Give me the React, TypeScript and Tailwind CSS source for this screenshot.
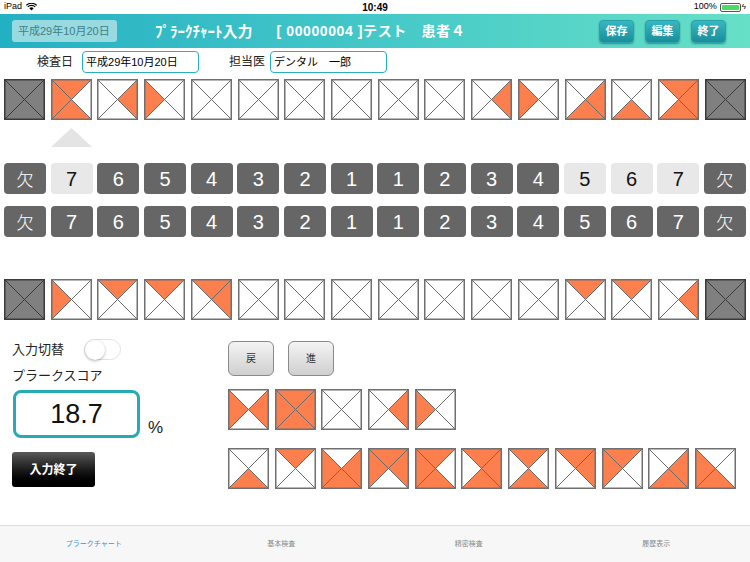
import React from 'react';

const ORANGE = '#fe7f4e';
const JP = { fontFamily: '"Liberation Sans", "Noto Sans CJK JP", sans-serif' };

// t r b l = orange triangles, 'x' = missing tooth
const TOP_ROW = ['x', 'tlb', 'r', 'l', '', '', '', '', '', '', 'r', 'l', 'rb', 'b', 'trb', 'x'];
const BOTTOM_ROW = ['x', 'l', 't', 't', 'tr', '', '', '', '', '', '', '', 't', 't', 'r', 'x'];
const SMALL_ROW_1 = ['lr', 'trbl', '', 'r', 'l'];
const SMALL_ROW_2 = ['b', 't', 'lrb', 'tlr', 'tlb', 'trb', 'tb', 'tr', 'tl', 'rb', 'lb'];

const ROW1 = ['欠', '7', '6', '5', '4', '3', '2', '1', '1', '2', '3', '4', '5', '6', '7', '欠'];
const ROW1_LIGHT = [1, 12, 13, 14];

function Tooth({ f }: { f: string }) {
  const s = 41;
  const c = s / 2;
  const missing = f === 'x';
  const tri = {
    t: `0,0 ${s},0 ${c},${c}`,
    r: `${s},0 ${s},${s} ${c},${c}`,
    b: `${s},${s} 0,${s} ${c},${c}`,
    l: `0,${s} 0,0 ${c},${c}`,
  };
  return (
    <svg width={s} height={s} viewBox={`0 0 ${s} ${s}`} className="shrink-0 block">
      <rect x="0" y="0" width={s} height={s} fill={missing ? '#808080' : '#fff'} />
      {!missing &&
        (['t', 'r', 'b', 'l'] as const).map((k) =>
          f.includes(k) ? <polygon key={k} points={tri[k]} fill={ORANGE} /> : null
        )}
      <line x1="0" y1="0" x2={s} y2={s} stroke={missing ? '#3a3a3a' : '#6a6a6a'} strokeWidth="1" />
      <line x1={s} y1="0" x2="0" y2={s} stroke={missing ? '#3a3a3a' : '#6a6a6a'} strokeWidth="1" />
      <rect x="0.75" y="0.75" width={s - 1.5} height={s - 1.5} fill="none" stroke={missing ? '#3a3a3a' : '#707070'} strokeWidth="1.5" />
    </svg>
  );
}

function NumRow({ light }: { light: number[] }) {
  return (
    <div className="flex justify-between px-[4px]">
      {ROW1.map((n, i) => {
        const isLight = light.includes(i);
        const kan = n === '欠';
        return (
          <div
            key={i}
            className={`w-[42px] h-[31px] rounded-[4px] flex items-center justify-center ${
              isLight ? 'bg-[#e8e8e8] text-[#111]' : 'bg-[#666666] text-white'
            } ${kan ? 'text-[#b0b0b0] text-[17px]' : 'text-[20px]'}`}
            style={{ fontFamily: kan ? '"Noto Sans CJK JP", sans-serif' : '"Liberation Sans", sans-serif', fontWeight: 300 }}
          >
            {n}
          </div>
        );
      })}
    </div>
  );
}

function HeaderBtn({ label }: { label: string }) {
  return (
    <div className="w-[35px] h-[23px] rounded-[4px] bg-gradient-to-b from-[#35b8c2] to-[#1a8e9a] border border-[#2aa0aa] shadow-[0_1px_2px_rgba(0,0,0,0.35)] flex items-center justify-center text-white text-[11px] font-bold">
      {label}
    </div>
  );
}

function GrayBtn({ label }: { label: string }) {
  return (
    <div className="w-[46px] h-[35px] rounded-[6px] border border-[#8a8a8a] bg-gradient-to-b from-[#f4f4f4] to-[#cfcfcf] flex items-center justify-center text-[10px] text-[#333]">
      {label}
    </div>
  );
}

export default function App() {
  return (
    <div className="w-[750px] h-[562px] bg-white flex flex-col overflow-hidden text-[#222]" style={JP}>
      {/* status bar */}
      <div className="h-[14px] relative flex items-center px-[4px] text-[9px] text-black">
        <span>iPad</span>
        <svg width="11" height="8" viewBox="0 0 12 9" className="ml-[4px]">
          <path d="M6 8.5 L3.6 6 A3.4 3.4 0 0 1 8.4 6 Z" fill="#000" />
          <path d="M1.8 4.3 A6 6 0 0 1 10.2 4.3" stroke="#000" strokeWidth="1.3" fill="none" />
          <path d="M0.2 2.6 A8.4 8.4 0 0 1 11.8 2.6" stroke="#000" strokeWidth="1.3" fill="none" />
        </svg>
        <span className="absolute left-1/2 -translate-x-1/2 font-bold text-[10px]">10:49</span>
        <div className="ml-auto flex items-center gap-[3px]">
          <span>100%</span>
          <div className="w-[21px] h-[9px] border border-[#555] rounded-[2px] p-[1px]">
            <div className="w-full h-full bg-[#4cd964] rounded-[1px]" />
          </div>
          <span className="text-[8px] -ml-[2px]">ϟ</span>
        </div>
      </div>

      {/* header */}
      <div className="h-[34px] bg-gradient-to-r from-[#22b0c3] via-[#44c8c8] to-[#66e0c6] flex items-center px-[12px]">
        <div className="w-[105px] h-[22px] rounded-[3px] bg-[#98dadf] text-[#3f7f88] text-[11px] flex items-center pl-[6px]">
          平成29年10月20日
        </div>
        <div className="ml-[38px] text-white font-bold text-[15px]" style={{ fontFamily: '"Noto Sans CJK JP", sans-serif' }}>
          ﾌﾟﾗｰｸﾁｬｰﾄ入力
        </div>
        <div className="ml-[24px] text-white font-bold text-[14px] tracking-[0.6px] whitespace-pre">
          [ 00000004 ]テスト　患者４
        </div>
        <div className="ml-auto mr-[12px] flex gap-[11px]">
          <HeaderBtn label="保存" />
          <HeaderBtn label="編集" />
          <HeaderBtn label="終了" />
        </div>
      </div>

      {/* date / doctor */}
      <div className="mt-[3px] h-[22px] flex items-center text-[12px]">
        <span className="ml-[37px]">検査日</span>
        <div className="ml-[9px] w-[117px] h-[22px] border-[1.5px] border-[#2ab0bd] rounded-[4px] flex items-center px-[3px] text-[11px] text-black">
          平成29年10月20日
        </div>
        <span className="ml-[30px]">担当医</span>
        <div className="ml-[5px] w-[117px] h-[22px] border-[1.5px] border-[#2ab0bd] rounded-[4px] flex items-center px-[3px] text-[11px] text-black">
          デンタル　一郎
        </div>
      </div>

      {/* upper teeth */}
      <div className="mt-[6px] flex justify-between px-[4px]">
        {TOP_ROW.map((f, i) => (
          <Tooth key={i} f={f} />
        ))}
      </div>

      {/* selection marker */}
      <div className="mt-[8px] h-[19px] pl-[51px]">
        <svg width="41" height="19" viewBox="0 0 41 19">
          <polygon points="20.5,0 41,19 0,19" fill="#e4e4e4" />
        </svg>
      </div>

      <div className="mt-[16px]">
        <NumRow light={ROW1_LIGHT} />
      </div>
      <div className="mt-[12px]">
        <NumRow light={[]} />
      </div>

      {/* lower teeth */}
      <div className="mt-[42px] flex justify-between px-[4px]">
        {BOTTOM_ROW.map((f, i) => (
          <Tooth key={i} f={f} />
        ))}
      </div>

      {/* bottom section */}
      <div className="mt-[19px] flex">
        <div className="w-[228px] shrink-0 pl-[12px]">
          <div className="h-[21px] flex items-center text-[13px]">
            <span>入力切替</span>
            <div className="ml-[20px] w-[37px] h-[21px] rounded-full border border-[#e2e2e2] bg-white relative">
              <div className="absolute left-0 top-0 w-[20px] h-[20px] -mt-[0.5px] rounded-full bg-white shadow-[0_1px_3px_rgba(0,0,0,0.3)]" />
            </div>
          </div>
          <div className="mt-[8px] text-[13px] leading-[16px]">プラークスコア</div>
          <div className="mt-[6px] flex items-end">
            <div className="ml-[1px] w-[127px] h-[48px] border-[3px] border-[#27aab6] rounded-[8px] flex items-center justify-center text-[27px] text-[#111]" style={{ fontFamily: '"Liberation Sans", sans-serif' }}>
              18.7
            </div>
            <span className="ml-[8px] mb-[-2px] text-[17px]" style={{ fontFamily: '"Liberation Sans", sans-serif' }}>%</span>
          </div>
          <div className="mt-[14px] w-[83px] h-[35px] rounded-[3px] bg-gradient-to-b from-[#5a5a5a] via-[#1c1c1c] to-[#000] flex items-center justify-center text-white text-[12px] font-bold">
            入力終了
          </div>
        </div>

        <div className="pt-[2px]">
          <div className="flex gap-[14px]">
            <GrayBtn label="戻" />
            <GrayBtn label="進" />
          </div>
          <div className="mt-[13px] flex gap-[5.7px]">
            {SMALL_ROW_1.map((f, i) => (
              <Tooth key={i} f={f} />
            ))}
          </div>
          <div className="mt-[18px] flex gap-[5.7px]">
            {SMALL_ROW_2.map((f, i) => (
              <Tooth key={i} f={f} />
            ))}
          </div>
        </div>
      </div>

      {/* tab bar */}
      <div className="mt-auto h-[37px] bg-[#f7f7f7] border-t border-[#dedede] grid grid-cols-4 items-center text-[7px]">
        <span className="text-center text-[#3d8fe0]">プラークチャート</span>
        <span className="text-center text-[#8a8a8a]">基本検査</span>
        <span className="text-center text-[#8a8a8a]">精密検査</span>
        <span className="text-center text-[#8a8a8a]">履歴表示</span>
      </div>
    </div>
  );
}
